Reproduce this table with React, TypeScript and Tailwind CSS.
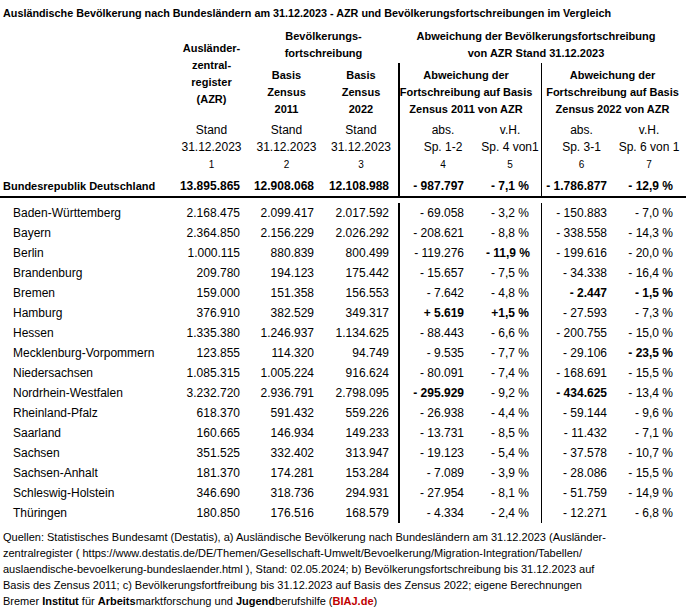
export default function App() {
  const rows = [
    ["Baden-Württemberg", "2.168.475", "2.099.417", "2.017.592", "- 69.058", "- 3,2 %", "- 150.883", "- 7,0 %"],
    ["Bayern", "2.364.850", "2.156.229", "2.026.292", "- 208.621", "- 8,8 %", "- 338.558", "- 14,3 %"],
    ["Berlin", "1.000.115", "880.839", "800.499", "- 119.276", "- 11,9 %", "- 199.616", "- 20,0 %"],
    ["Brandenburg", "209.780", "194.123", "175.442", "- 15.657", "- 7,5 %", "- 34.338", "- 16,4 %"],
    ["Bremen", "159.000", "151.358", "156.553", "- 7.642", "- 4,8 %", "- 2.447", "- 1,5 %"],
    ["Hamburg", "376.910", "382.529", "349.317", "+ 5.619", "+1,5 %", "- 27.593", "- 7,3 %"],
    ["Hessen", "1.335.380", "1.246.937", "1.134.625", "- 88.443", "- 6,6 %", "- 200.755", "- 15,0 %"],
    ["Mecklenburg-Vorpommern", "123.855", "114.320", "94.749", "- 9.535", "- 7,7 %", "- 29.106", "- 23,5 %"],
    ["Niedersachsen", "1.085.315", "1.005.224", "916.624", "- 80.091", "- 7,4 %", "- 168.691", "- 15,5 %"],
    ["Nordrhein-Westfalen", "3.232.720", "2.936.791", "2.798.095", "- 295.929", "- 9,2 %", "- 434.625", "- 13,4 %"],
    ["Rheinland-Pfalz", "618.370", "591.432", "559.226", "- 26.938", "- 4,4 %", "- 59.144", "- 9,6 %"],
    ["Saarland", "160.665", "146.934", "149.233", "- 13.731", "- 8,5 %", "- 11.432", "- 7,1 %"],
    ["Sachsen", "351.525", "332.402", "313.947", "- 19.123", "- 5,4 %", "- 37.578", "- 10,7 %"],
    ["Sachsen-Anhalt", "181.370", "174.281", "153.284", "- 7.089", "- 3,9 %", "- 28.086", "- 15,5 %"],
    ["Schleswig-Holstein", "346.690", "318.736", "294.931", "- 27.954", "- 8,1 %", "- 51.759", "- 14,9 %"],
    ["Thüringen", "180.850", "176.516", "168.579", "- 4.334", "- 2,4 %", "- 12.271", "- 6,8 %"],
  ]

  // highlighted cells (row, column)
  const bold = ["2-5", "4-6", "4-7", "5-4", "5-5", "7-7", "9-4", "9-6"]

  // right padding / borders per number column
  const cellCls = [
    "",
    "pr-[9px]",
    "pr-[10px]",
    "pr-[9px]",
    "pr-[22px] border-l-2 border-black",
    "pr-[12px]",
    "pr-[14px] border-l border-black",
    "pr-[13px]",
  ]

  const grid = "grid grid-cols-[174px_75px_75px_74px_88px_55px_80px_65px]"

  return (
    <div className="w-[686px] h-[611px] bg-white text-black font-['Liberation_Sans',Arial,sans-serif] text-[12px] overflow-hidden">
      <div className="h-[26px] leading-[26px] pl-[3px] font-bold text-[10.8px] whitespace-nowrap">
        Ausländische Bevölkerung nach Bundesländern am 31.12.2023 - AZR und Bevölkerungsfortschreibungen im Vergleich
      </div>

      {/* header */}
      <div className={`${grid} grid-rows-[37px_58px] font-bold text-[11px] leading-[17px] whitespace-nowrap`}>
        <div className="col-start-2 row-span-2 flex flex-col items-center justify-center">
          <span>Ausländer-</span>
          <span>zentral-</span>
          <span>register</span>
          <span>(AZR)</span>
        </div>
        <div className="col-start-3 col-span-2 flex flex-col items-center pt-[2px]">
          <span>Bevölkerungs-</span>
          <span>fortschreibung</span>
        </div>
        <div className="col-start-5 col-span-4 flex flex-col items-center pt-[2px] pr-[12px]">
          <span>Abweichung der Bevölkerungsfortschreibung</span>
          <span>von AZR Stand 31.12.2023</span>
        </div>
        <div className="col-start-3 flex flex-col items-center pt-[4px]">
          <span>Basis</span>
          <span>Zensus</span>
          <span>2011</span>
        </div>
        <div className="col-start-4 flex flex-col items-center pt-[4px]">
          <span>Basis</span>
          <span>Zensus</span>
          <span>2022</span>
        </div>
        <div className="col-start-5 col-span-2 flex flex-col items-center pt-[4px] pr-[9px] border-l-2 border-black">
          <span>Abweichung der</span>
          <span>Fortschreibung auf Basis</span>
          <span>Zensus 2011 von AZR</span>
        </div>
        <div className="col-start-7 col-span-2 flex flex-col items-center pt-[4px] pr-[3px] border-l border-black">
          <span>Abweichung der</span>
          <span>Fortschreibung auf Basis</span>
          <span>Zensus 2022 von AZR</span>
        </div>
      </div>

      {/* Stand / Spalten */}
      <div className={`${grid} h-[55px] leading-[17px] whitespace-nowrap`}>
        <div />
        {[
          ["Stand", "31.12.2023", "1", ""],
          ["Stand", "31.12.2023", "2", ""],
          ["Stand", "31.12.2023", "3", ""],
          ["abs.", "Sp. 1-2", "4", "border-l-2 border-black"],
          ["v.H.", "Sp. 4 von1", "5", "pr-[7px]"],
          ["abs.", "Sp. 3-1", "6", "border-l border-black"],
          ["v.H.", "Sp. 6 von 1", "7", "pr-[9px]"],
        ].map((c, i) => (
          <div key={i} className={`flex flex-col items-center pt-[1px] ${c[3]}`}>
            <span>{c[0]}</span>
            <span>{c[1]}</span>
            <span className="text-[10px]">{c[2]}</span>
          </div>
        ))}
      </div>

      {/* Deutschland */}
      <div className={`${grid} h-[22px] border-b-2 border-black font-bold whitespace-nowrap`}>
        <div className="pl-[3px] text-[11px] leading-[20px]">Bundesrepublik Deutschland</div>
        {["13.895.865", "12.908.068", "12.108.988", "- 987.797", "- 7,1 %", "- 1.786.877", "- 12,9 %"].map((v, i) => (
          <div key={i} className={`text-right leading-[20px] ${cellCls[i + 1]}`}>
            {v}
          </div>
        ))}
      </div>

      {/* Bundesländer */}
      {rows.map((r, ri) => (
        <div key={ri} className={`${grid} whitespace-nowrap ${ri === 0 ? "h-[25px] pt-[5px]" : "h-[20px]"}`}>
          <div className="pl-[13px] leading-[20px]">{r[0]}</div>
          {r.slice(1).map((v, ci) => (
            <div
              key={ci}
              className={`text-right leading-[20px] ${cellCls[ci + 1]} ${bold.includes(`${ri}-${ci + 1}`) ? "font-bold" : ""}`}
            >
              {v}
            </div>
          ))}
        </div>
      ))}

      {/* Quellen */}
      <div className="pt-[6px] pl-[3px] text-[11px] leading-[16px] whitespace-nowrap">
        Quellen: Statistisches Bundesamt (Destatis), a) Ausländische Bevölkerung nach Bundesländern am 31.12.2023 (Ausländer-
        <br />
        zentralregister ( https://www.destatis.de/DE/Themen/Gesellschaft-Umwelt/Bevoelkerung/Migration-Integration/Tabellen/
        <br />
        auslaendische-bevoelkerung-bundeslaender.html ), Stand: 02.05.2024; b) Bevölkerungsfortschreibung bis 31.12.2023 auf
        <br />
        Basis des Zensus 2011; c) Bevölkerungsfortfreibung bis 31.12.2023 auf Basis des Zensus 2022; eigene Berechnungen
        <br />
        Bremer <b>Institut</b> für <b>Arbeits</b>marktforschung und <b>Jugend</b>berufshilfe (
        <b className="text-[#c00000]">BIAJ.de</b>)
      </div>
    </div>
  )
}
